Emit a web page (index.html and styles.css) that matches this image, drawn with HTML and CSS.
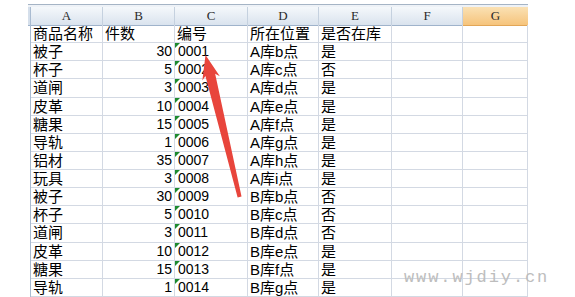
FILE: index.html
```html
<!DOCTYPE html>
<html lang="zh">
<head>
<meta charset="utf-8">
<link rel="stylesheet" href="styles.css">
</head>
<body>
<div class="sheet">
  <div class="topline"></div>
  <div class="row head"><div class="stub"></div><div class="ch">A</div><div class="ch">B</div><div class="ch">C</div><div class="ch">D</div><div class="ch">E</div><div class="ch">F</div><div class="ch sel">G</div></div>
  <div class="row"><div class="stub"></div><div class="c">商品名称</div><div class="c">件数</div><div class="c">编号</div><div class="c">所在位置</div><div class="c">是否在库</div><div class="c"></div><div class="c"></div></div>
  <div class="row"><div class="stub"></div><div class="c">被子</div><div class="c r">30</div><div class="c code">0001</div><div class="c">A库b点</div><div class="c">是</div><div class="c"></div><div class="c"></div></div>
  <div class="row"><div class="stub"></div><div class="c">杯子</div><div class="c r">5</div><div class="c code">0002</div><div class="c">A库c点</div><div class="c">否</div><div class="c"></div><div class="c"></div></div>
  <div class="row"><div class="stub"></div><div class="c">道闸</div><div class="c r">3</div><div class="c code">0003</div><div class="c">A库d点</div><div class="c">是</div><div class="c"></div><div class="c"></div></div>
  <div class="row"><div class="stub"></div><div class="c">皮革</div><div class="c r">10</div><div class="c code">0004</div><div class="c">A库e点</div><div class="c">是</div><div class="c"></div><div class="c"></div></div>
  <div class="row"><div class="stub"></div><div class="c">糖果</div><div class="c r">15</div><div class="c code">0005</div><div class="c">A库f点</div><div class="c">是</div><div class="c"></div><div class="c"></div></div>
  <div class="row"><div class="stub"></div><div class="c">导轨</div><div class="c r">1</div><div class="c code">0006</div><div class="c">A库g点</div><div class="c">是</div><div class="c"></div><div class="c"></div></div>
  <div class="row"><div class="stub"></div><div class="c">铝材</div><div class="c r">35</div><div class="c code">0007</div><div class="c">A库h点</div><div class="c">是</div><div class="c"></div><div class="c"></div></div>
  <div class="row"><div class="stub"></div><div class="c">玩具</div><div class="c r">3</div><div class="c code">0008</div><div class="c">A库i点</div><div class="c">是</div><div class="c"></div><div class="c"></div></div>
  <div class="row"><div class="stub"></div><div class="c">被子</div><div class="c r">30</div><div class="c code">0009</div><div class="c">B库b点</div><div class="c">否</div><div class="c"></div><div class="c"></div></div>
  <div class="row"><div class="stub"></div><div class="c">杯子</div><div class="c r">5</div><div class="c code">0010</div><div class="c">B库c点</div><div class="c">否</div><div class="c"></div><div class="c"></div></div>
  <div class="row"><div class="stub"></div><div class="c">道闸</div><div class="c r">3</div><div class="c code">0011</div><div class="c">B库d点</div><div class="c">否</div><div class="c"></div><div class="c"></div></div>
  <div class="row"><div class="stub"></div><div class="c">皮革</div><div class="c r">10</div><div class="c code">0012</div><div class="c">B库e点</div><div class="c">是</div><div class="c"></div><div class="c"></div></div>
  <div class="row"><div class="stub"></div><div class="c">糖果</div><div class="c r">15</div><div class="c code">0013</div><div class="c">B库f点</div><div class="c">是</div><div class="c"></div><div class="c"></div></div>
  <div class="row"><div class="stub"></div><div class="c">导轨</div><div class="c r">1</div><div class="c code">0014</div><div class="c">B库g点</div><div class="c">是</div><div class="c"></div><div class="c"></div></div>
</div>
<svg class="arrow" width="575" height="297" viewBox="0 0 575 297">
  <g transform="translate(205.5 55) rotate(-13.5)">
    <polygon points="0,0 9,24 5,20.5 2,146 -2,146 -5,20.5 -9,24" fill="#e8453c"/>
  </g>
</svg>
<div class="watermark">www.wjdiy.cn</div>
</body>
</html>
```
FILE: styles.css
```css
* { box-sizing: border-box; }
body {
  margin: 0;
  width: 575px;
  height: 297px;
  overflow: hidden;
  position: relative;
  background: #fff;
  font-family: "Liberation Sans", "Noto Sans CJK SC", sans-serif;
  color: #000;
}
.sheet {
  margin-left: 28px;
  padding-top: 4px;
  width: 500px;
}
.topline {
  height: 3px;
  border-top: 1px solid #a5b4c5;
  background: #eef2f7;
}
.row {
  display: grid;
  grid-template-columns: 3px 72px 72px 73px 71px 73px 71px 65px;
  height: 18.14px;
}
.row.head { height: 18px; }
.stub {
  border-right: 1px solid #a9bbd1;
}
.head .stub {
  background: #d5dfeb;
  border-bottom: 1px solid #9fb3cb;
}
.ch {
  background: linear-gradient(#f5f8fb, #dae3ee);
  border-right: 1px solid #c5d1df;
  border-bottom: 1px solid #9fb3cb;
  font-family: "Liberation Serif", serif;
  font-size: 13px;
  line-height: 18px;
  text-align: center;
  color: #2a2a2a;
}
.ch.sel {
  background: linear-gradient(#fae1b4, #f6c47c);
  border-right: none;
  border-bottom: 1px solid #e2a657;
}
.c {
  border-right: 1px solid #d3d9e3;
  border-bottom: 1px solid #d3d9e3;
  font-size: 15px;
  line-height: 17px;
  padding-left: 2px;
  white-space: nowrap;
}
.c.r {
  text-align: right;
  padding-right: 2px;
  font-size: 14px;
}
.c.code {
  position: relative;
  font-size: 14px;
  padding-left: 3px;
}
.c.code::before {
  content: "";
  position: absolute;
  top: 0;
  left: 0;
  border-top: 5px solid #1d8a2e;
  border-right: 5px solid transparent;
}
.arrow {
  position: absolute;
  left: 0;
  top: 0;
  pointer-events: none;
}
.watermark {
  position: absolute;
  left: 404px;
  top: 268px;
  font-family: "Liberation Mono", monospace;
  font-size: 17px;
  letter-spacing: 1.9px;
  color: #bdbdbd;
}
```
